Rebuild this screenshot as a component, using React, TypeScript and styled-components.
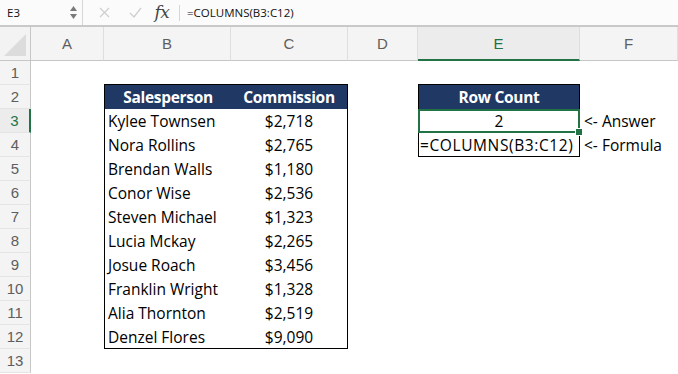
import React from "react";
import styled, { createGlobalStyle } from "styled-components";

const Global = createGlobalStyle`
  html, body { margin: 0; padding: 0; background: #ffffff; }
  body { font-family: "Liberation Sans", Arial, sans-serif; overflow: hidden; }
`;

const NAVY = "#203864";
const GREEN = "#217346";

const Page = styled.div`
  width: 678px;
  height: 374px;
  display: flex;
  flex-direction: column;
  background: #fff;
`;

const FormulaBar = styled.div`
  height: 25px;
  display: flex;
  align-items: center;
  background: #fbfbfb;
  border-bottom: 2px solid #c9c9c9;
  font-family: "Open Sans", "Liberation Sans", sans-serif;
  font-size: 11.5px;
  color: #111;
`;

const NameBox = styled.div`
  width: 62px;
  padding-left: 7px;
`;

const Spinner = styled.div`
  width: 9px;
  display: flex;
  flex-direction: column;
  align-items: center;
  gap: 3px;
  margin-right: 4px;
`;

const Divider = styled.div<{ $h: number }>`
  width: 1px;
  height: ${(p) => p.$h}px;
  background: #d6d6d6;
`;

const IconSlot = styled.div<{ $w: number }>`
  width: ${(p) => p.$w}px;
  display: flex;
  justify-content: center;
  align-items: center;
`;

const Fx = styled.span`
  font-family: "DejaVu Serif", "Liberation Serif", serif;
  font-style: italic;
  font-size: 17px;
  color: #444;
  letter-spacing: -0.5px;
  line-height: 1;
`;

const FormulaText = styled.div`
  padding-left: 7px;
`;

const Sheet = styled.div`
  display: grid;
  grid-template-columns: 31px 73px 127px 117px 70px 162px 98px;
  grid-template-rows: 34px repeat(13, 24px);
`;

const Corner = styled.div`
  background: #f3f3f3;
  border-right: 1px solid #c6c6c6;
  border-bottom: 1px solid #c6c6c6;
  position: relative;
  &::after {
    content: "";
    position: absolute;
    right: 4px;
    bottom: 4px;
    width: 0;
    height: 0;
    border-left: 22px solid transparent;
    border-bottom: 22px solid #dcdcdc;
  }
`;

const ColHead = styled.div<{ $active?: boolean }>`
  background: ${(p) => (p.$active ? "#ececec" : "#f4f4f4")};
  border-right: 1px solid #dedede;
  border-bottom: ${(p) => (p.$active ? `2px solid ${GREEN}` : "1px solid #c6c6c6")};
  display: flex;
  align-items: center;
  justify-content: center;
  font-size: 15px;
  color: ${(p) => (p.$active ? GREEN : "#5e5e5e")};
`;

const RowHead = styled.div<{ $active?: boolean }>`
  background: ${(p) => (p.$active ? "#ececec" : "#f4f4f4")};
  border-right: ${(p) => (p.$active ? `2px solid ${GREEN}` : "1px solid #c6c6c6")};
  border-bottom: 1px solid #e4e4e4;
  display: flex;
  align-items: center;
  justify-content: center;
  font-size: 15px;
  color: ${(p) => (p.$active ? GREEN : "#5e5e5e")};
`;

const DataTable = styled.div`
  grid-column: 3 / 5;
  grid-row: 3 / 14;
  margin-top: -1px;
  border: 1px solid #000;
  display: grid;
  grid-template-columns: 126px 1fr;
  grid-template-rows: 24px repeat(10, 24px);
  font-family: "Open Sans", "Liberation Sans", sans-serif;
  font-size: 15.5px;
  color: #000;
`;

const HeadCell = styled.div`
  background: ${NAVY};
  color: #fff;
  font-weight: 700;
  letter-spacing: -0.3px;
  display: flex;
  align-items: center;
  justify-content: center;
`;

const Cell = styled.div<{ $align?: "left" | "center" }>`
  display: flex;
  align-items: center;
  justify-content: ${(p) => (p.$align === "center" ? "center" : "flex-start")};
  padding-left: ${(p) => (p.$align === "center" ? "0" : "3px")};
  white-space: nowrap;
`;

const ResultBlock = styled.div`
  grid-column: 6 / 7;
  grid-row: 3 / 6;
  margin-top: -1px;
  display: grid;
  grid-template-rows: 25px 24px 24px;
  font-family: "Open Sans", "Liberation Sans", sans-serif;
  font-size: 15.5px;
  color: #000;
`;

const ResultHead = styled(HeadCell)`
  border: 1px solid #000;
  border-bottom: none;
`;

const AnswerCell = styled.div`
  position: relative;
  border: 2px solid ${GREEN};
  display: flex;
  align-items: center;
  justify-content: center;
  &::after {
    content: "";
    position: absolute;
    right: -5px;
    bottom: -5px;
    width: 6px;
    height: 6px;
    background: ${GREEN};
    border: 1px solid #fff;
  }
`;

const FormulaCell = styled.div`
  border: 1px solid #000;
  border-top: none;
  display: flex;
  align-items: center;
  padding-left: 1px;
  white-space: nowrap;
  letter-spacing: 0.6px;
`;

const NoteBlock = styled.div`
  grid-column: 7 / 8;
  grid-row: 4 / 6;
  display: grid;
  grid-template-rows: 24px 24px;
  font-family: "Open Sans", "Liberation Sans", sans-serif;
  font-size: 15.5px;
  color: #000;
`;

const Note = styled.div`
  display: flex;
  align-items: center;
  padding-left: 4px;
  white-space: nowrap;
`;

const rows: [string, string][] = [
  ["Kylee Townsen", "$2,718"],
  ["Nora Rollins", "$2,765"],
  ["Brendan Walls", "$1,180"],
  ["Conor Wise", "$2,536"],
  ["Steven Michael", "$1,323"],
  ["Lucia Mckay", "$2,265"],
  ["Josue Roach", "$3,456"],
  ["Franklin Wright", "$1,328"],
  ["Alia Thornton", "$2,519"],
  ["Denzel Flores", "$9,090"],
];

const cols = ["A", "B", "C", "D", "E", "F"];

export default function App() {
  return (
    <Page>
      <Global />
      <FormulaBar>
        <NameBox>E3</NameBox>
        <Spinner>
          <svg width="7" height="5" viewBox="0 0 7 5">
            <path d="M3.5 0 L7 5 L0 5 Z" fill="#7a7a7a" />
          </svg>
          <svg width="7" height="5" viewBox="0 0 7 5">
            <path d="M0 0 L7 0 L3.5 5 Z" fill="#7a7a7a" />
          </svg>
        </Spinner>
        <Divider $h={25} />
        <IconSlot $w={42}>
          <svg width="11" height="11" viewBox="0 0 11 11">
            <path d="M1 1 L10 10 M10 1 L1 10" stroke="#cfcfcf" strokeWidth="1.3" />
          </svg>
        </IconSlot>
        <IconSlot $w={20}>
          <svg width="13" height="11" viewBox="0 0 13 11">
            <path d="M1 6 L5 10 L12 1" stroke="#cfcfcf" strokeWidth="1.3" fill="none" />
          </svg>
        </IconSlot>
        <IconSlot $w={34}>
          <Fx>fx</Fx>
        </IconSlot>
        <Divider $h={16} />
        <FormulaText>=COLUMNS(B3:C12)</FormulaText>
      </FormulaBar>
      <Sheet>
        <Corner />
        {cols.map((c) => (
          <ColHead key={c} $active={c === "E"}>
            {c}
          </ColHead>
        ))}
        {Array.from({ length: 13 }, (_, i) => (
          <RowHead key={i} $active={i === 2} style={{ gridRow: i + 2, gridColumn: 1 }}>
            {i + 1}
          </RowHead>
        ))}
        <DataTable>
          <HeadCell>Salesperson</HeadCell>
          <HeadCell>Commission</HeadCell>
          {rows.map(([n, v]) => (
            <React.Fragment key={n}>
              <Cell $align="left">{n}</Cell>
              <Cell $align="center">{v}</Cell>
            </React.Fragment>
          ))}
        </DataTable>
        <ResultBlock>
          <ResultHead>Row Count</ResultHead>
          <AnswerCell>2</AnswerCell>
          <FormulaCell>=COLUMNS(B3:C12)</FormulaCell>
        </ResultBlock>
        <NoteBlock>
          <Note>&lt;- Answer</Note>
          <Note>&lt;- Formula</Note>
        </NoteBlock>
      </Sheet>
    </Page>
  );
}
